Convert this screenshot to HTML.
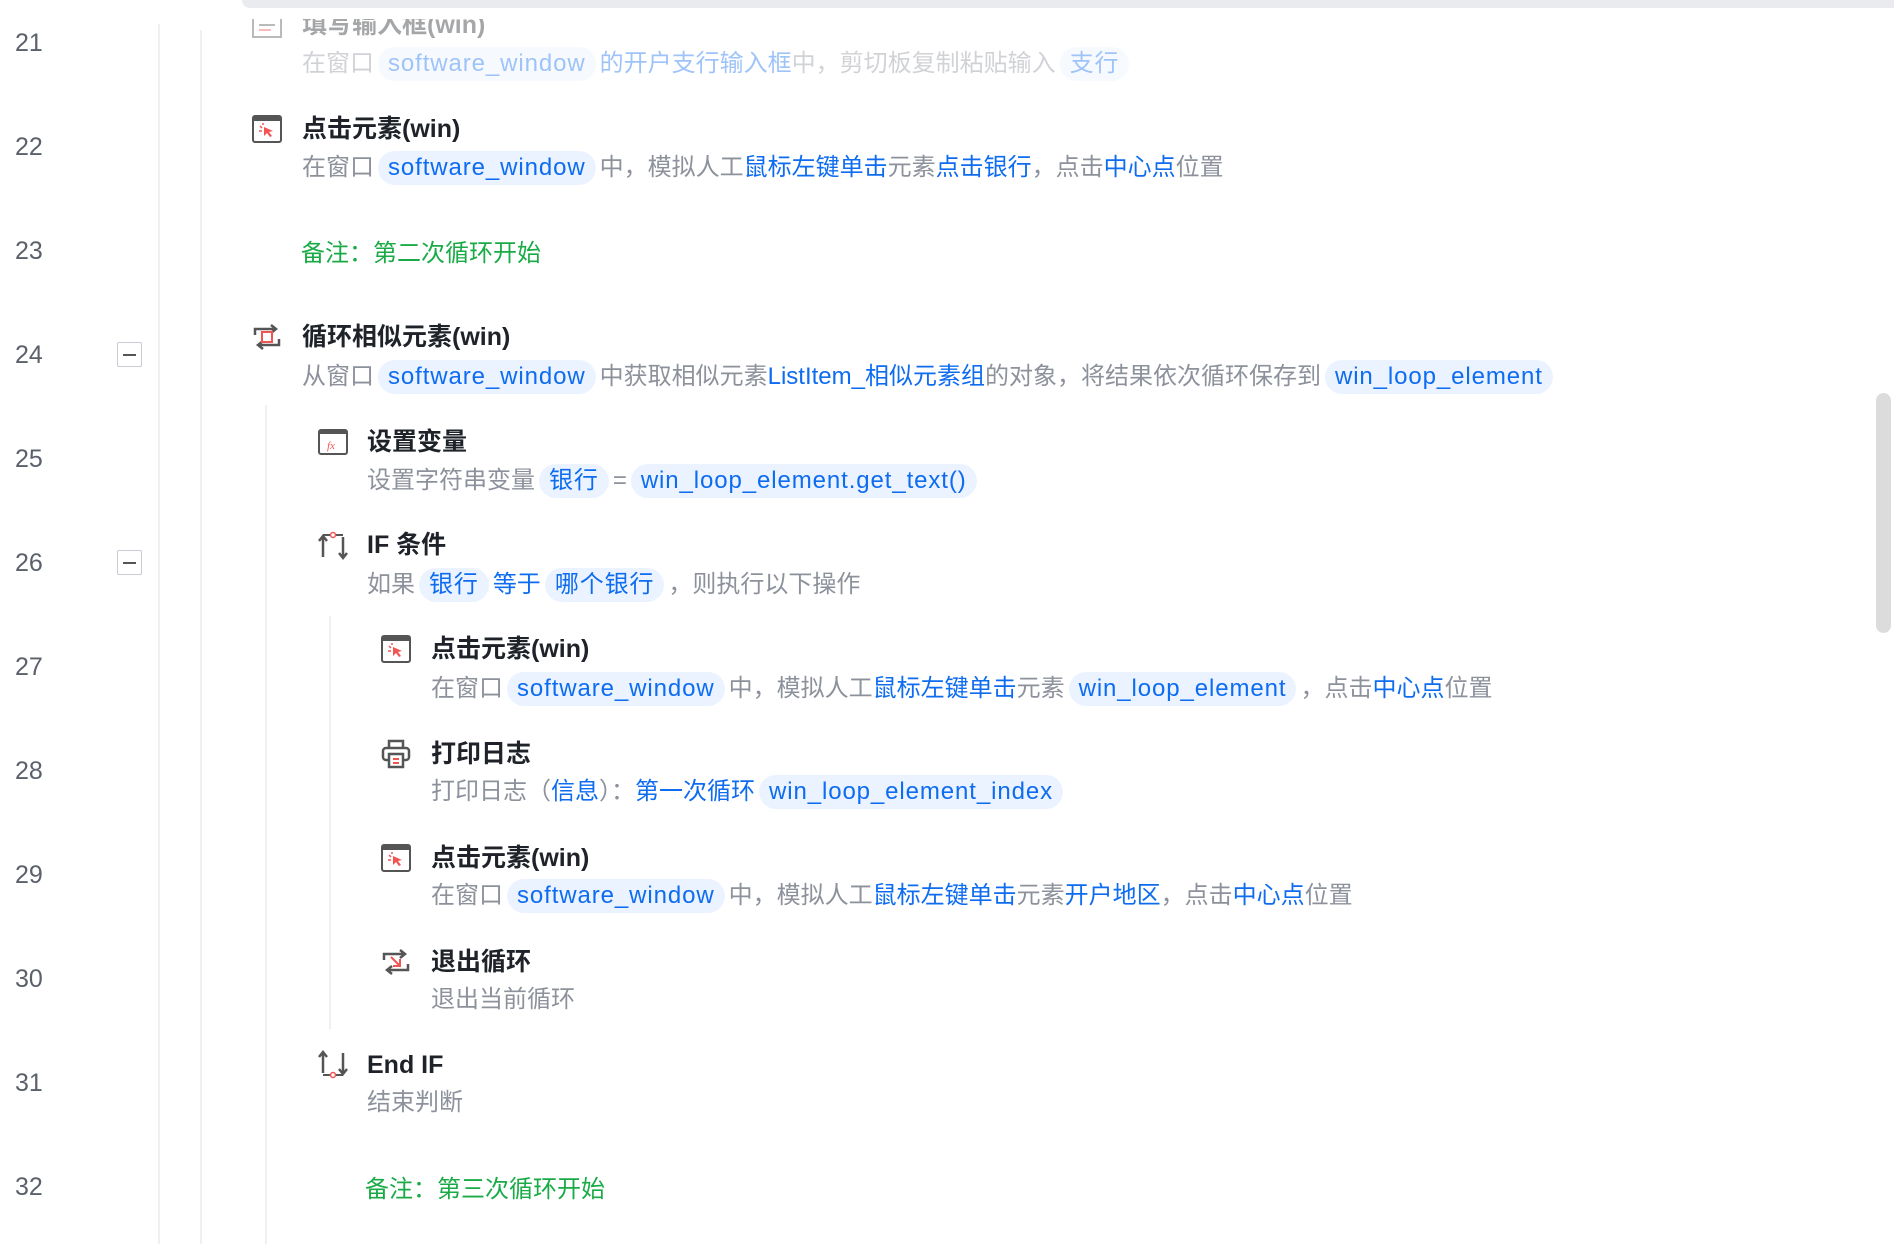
<!DOCTYPE html>
<html><head><meta charset="utf-8"><style>
body{margin:0;width:1894px;height:1244px;overflow:hidden;background:#fff;font-family:"Liberation Sans","Noto Sans CJK SC",sans-serif;position:relative}
.n{position:absolute;left:15px;width:40px;font-size:25px;line-height:30px;color:#5b606b}
.vl{position:absolute;width:2px;background:#eef0f3}
.box{position:absolute;left:117px;width:23px;height:23px;border:1.5px solid #c9ccd2;border-radius:2px;background:#fff}
.box:after{content:"";position:absolute;left:5px;right:5px;top:10.5px;height:2px;background:#555}
.ic{position:absolute;width:32px;height:32px}
.t{position:absolute;font-weight:bold;font-size:25px;line-height:34px;color:#1f2329;white-space:nowrap}
.d{position:absolute;font-size:24px;line-height:36px;color:#8c919b;white-space:nowrap}
.b{color:#0e6cf0}
.c{display:inline-block;background:#eaf3ff;border-radius:18px;padding:0 10px;margin:0 4px;color:#0e6cf0;line-height:34px;letter-spacing:0.9px}
.g{position:absolute;font-size:24px;line-height:36px;color:#1aab47;white-space:nowrap}
</style></head><body>

<div class="vl" style="left:158px;top:24px;height:1220px"></div>
<div class="vl" style="left:200px;top:30px;height:1214px"></div>
<div class="vl" style="left:265px;top:405px;height:839px"></div>
<div class="vl" style="left:329px;top:616px;height:413px"></div>

<div class="n" style="top:28px">21</div>
<div class="n" style="top:132px">22</div>
<div class="n" style="top:236px">23</div>
<div class="n" style="top:340px">24</div>
<div class="n" style="top:444px">25</div>
<div class="n" style="top:548px">26</div>
<div class="n" style="top:652px">27</div>
<div class="n" style="top:756px">28</div>
<div class="n" style="top:860px">29</div>
<div class="n" style="top:964px">30</div>
<div class="n" style="top:1068px">31</div>
<div class="n" style="top:1172px">32</div>

<div class="box" style="top:342px"></div>
<div class="box" style="top:550px"></div>

<div style="opacity:0.4">
<svg class="ic" style="left:251px;top:9px" viewBox="0 0 32 32"><rect x="2" y="4" width="28" height="24" fill="none" stroke="#555" stroke-width="2"/><line x1="8" y1="16" x2="24" y2="16" stroke="#555" stroke-width="2"/><line x1="8" y1="21" x2="20" y2="21" stroke="#e55" stroke-width="2"/></svg>
<div class="t" style="left:302px;top:8px">填写输入框(win)</div>
<div class="d" style="left:302px;top:46px">在窗口<span class="c">software_window</span><span class="b">的开户支行输入框</span>中，剪切板复制粘贴输入<span class="c">支行</span></div>
</div>

<div style="position:absolute;left:0;top:0;width:1894px;height:19px;background:#fff"></div>
<div style="position:absolute;left:242px;top:0;width:1652px;height:8px;background:#e9ebef;border-radius:0 0 0 8px"></div>

<svg class="ic" style="left:251px;top:113px" viewBox="0 0 32 32"><rect x="2" y="3" width="28" height="26" rx="2" fill="none" stroke="#555" stroke-width="2"/><rect x="2" y="3" width="28" height="5" fill="#555"/><path d="M13 14l9 4-4 1 3 4-2 1-3-4-3 3z" fill="#f25454"/><path d="M9 13l2 2M8 18h3M12 10v2" stroke="#f25454" stroke-width="1.5"/></svg>
<div class="t" style="left:302px;top:112px">点击元素(win)</div>
<div class="d" style="left:302px;top:150px">在窗口<span class="c">software_window</span>中，模拟人工<span class="b">鼠标左键单击</span>元素<span class="b">点击银行</span>，点击<span class="b">中心点</span>位置</div>

<div class="g" style="left:301px;top:236px">备注：第二次循环开始</div>

<svg class="ic" style="left:251px;top:321px" viewBox="0 0 32 32"><path d="M4 14V8h20M20 4l5 4-5 4" fill="none" stroke="#555" stroke-width="2.5"/><path d="M28 18v6H8M12 20l-5 4 5 4" fill="none" stroke="#555" stroke-width="2.5"/><rect x="11" y="11" width="10" height="10" fill="none" stroke="#f25454" stroke-width="2"/></svg>
<div class="t" style="left:302px;top:320px">循环相似元素(win)</div>
<div class="d" style="left:302px;top:359px">从窗口<span class="c">software_window</span>中获取相似元素<span class="b">ListItem_相似元素组</span>的对象，将结果依次循环保存到<span class="c">win_loop_element</span></div>

<svg class="ic" style="left:317px;top:426px" viewBox="0 0 32 32"><rect x="2" y="4" width="28" height="24" rx="2" fill="none" stroke="#555" stroke-width="2"/><rect x="2" y="4" width="28" height="4" fill="#555"/><text x="10" y="23" font-size="11" font-style="italic" fill="#f25454" font-family="Liberation Serif">fx</text></svg>
<div class="t" style="left:367px;top:425px">设置变量</div>
<div class="d" style="left:367px;top:463px">设置字符串变量<span class="c">银行</span>=<span class="c">win_loop_element.get_text()</span></div>

<svg class="ic" style="left:317px;top:529px" viewBox="0 0 32 32"><path d="M6 28V8M2 12l4-5 4 5" fill="none" stroke="#555" stroke-width="2.5"/><path d="M26 8v20M22 24l4 5 4-5" fill="none" stroke="#555" stroke-width="2.5"/><path d="M6 6h8M18 6h8" stroke="#555" stroke-width="2"/><circle cx="16" cy="6" r="2.5" fill="none" stroke="#f25454" stroke-width="1.5"/></svg>
<div class="t" style="left:367px;top:528px">IF 条件</div>
<div class="d" style="left:367px;top:567px">如果<span class="c">银行</span><span class="b">等于</span><span class="c">哪个银行</span>，则执行以下操作</div>

<svg class="ic" style="left:380px;top:633px" viewBox="0 0 32 32"><rect x="2" y="3" width="28" height="26" rx="2" fill="none" stroke="#555" stroke-width="2"/><rect x="2" y="3" width="28" height="5" fill="#555"/><path d="M13 14l9 4-4 1 3 4-2 1-3-4-3 3z" fill="#f25454"/><path d="M9 13l2 2M8 18h3M12 10v2" stroke="#f25454" stroke-width="1.5"/></svg>
<div class="t" style="left:431px;top:632px">点击元素(win)</div>
<div class="d" style="left:431px;top:671px">在窗口<span class="c">software_window</span>中，模拟人工<span class="b">鼠标左键单击</span>元素<span class="c">win_loop_element</span>，点击<span class="b">中心点</span>位置</div>

<svg class="ic" style="left:380px;top:738px" viewBox="0 0 32 32"><path d="M9 10V3h14v7" fill="none" stroke="#555" stroke-width="2.5"/><rect x="3" y="10" width="26" height="12" rx="3" fill="none" stroke="#555" stroke-width="2.5"/><rect x="9" y="16" width="14" height="13" fill="#fff" stroke="#555" stroke-width="2.5"/><path d="M13 21h6M13 25h6" stroke="#f25454" stroke-width="2"/></svg>
<div class="t" style="left:431px;top:737px">打印日志</div>
<div class="d" style="left:431px;top:774px">打印日志（<span class="b">信息</span>）：<span class="b">第一次循环</span><span class="c">win_loop_element_index</span></div>

<svg class="ic" style="left:380px;top:842px" viewBox="0 0 32 32"><rect x="2" y="3" width="28" height="26" rx="2" fill="none" stroke="#555" stroke-width="2"/><rect x="2" y="3" width="28" height="5" fill="#555"/><path d="M13 14l9 4-4 1 3 4-2 1-3-4-3 3z" fill="#f25454"/><path d="M9 13l2 2M8 18h3M12 10v2" stroke="#f25454" stroke-width="1.5"/></svg>
<div class="t" style="left:431px;top:841px">点击元素(win)</div>
<div class="d" style="left:431px;top:878px">在窗口<span class="c">software_window</span>中，模拟人工<span class="b">鼠标左键单击</span>元素<span class="b">开户地区</span>，点击<span class="b">中心点</span>位置</div>

<svg class="ic" style="left:380px;top:946px" viewBox="0 0 32 32"><path d="M4 14V8h20M20 4l5 4-5 4" fill="none" stroke="#555" stroke-width="2.5"/><path d="M28 18v6H8M12 20l-5 4 5 4" fill="none" stroke="#555" stroke-width="2.5"/><path d="M11 11l9 9M13 20h7v-7" fill="none" stroke="#f25454" stroke-width="2"/></svg>
<div class="t" style="left:431px;top:945px">退出循环</div>
<div class="d" style="left:431px;top:982px">退出当前循环</div>

<svg class="ic" style="left:317px;top:1049px" viewBox="0 0 32 32"><path d="M6 4v20M2 8l4-5 4 5" fill="none" stroke="#555" stroke-width="2.5"/><path d="M26 24V4M22 20l4 5 4-5" fill="none" stroke="#555" stroke-width="2.5"/><path d="M6 26h8M18 26h8" stroke="#555" stroke-width="2"/><circle cx="16" cy="26" r="2.5" fill="none" stroke="#f25454" stroke-width="1.5"/></svg>
<div class="t" style="left:367px;top:1048px">End IF</div>
<div class="d" style="left:367px;top:1085px">结束判断</div>

<div class="g" style="left:365px;top:1172px">备注：第三次循环开始</div>

<div style="position:absolute;left:1876px;top:393px;width:15px;height:240px;background:#dcdcdc;border-radius:8px"></div>
</body></html>
